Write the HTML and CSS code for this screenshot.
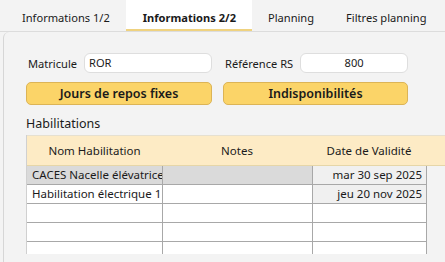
FILE: index.html
```html
<!DOCTYPE html>
<html lang="fr">
<head>
<meta charset="utf-8">
<link rel="stylesheet" href="styles.css">
</head>
<body>
<div class="tabs">
  <div class="tab">Informations 1/2</div>
  <div class="tab active">Informations 2/2</div>
  <div class="tab">Planning</div>
  <div class="tab">Filtres planning</div>
</div>
<div class="panel">
  <div class="form">
    <div class="field"><span class="lbl">Matricule</span><div class="input">ROR</div></div>
    <div class="field"><span class="lbl">Référence RS</span><div class="input center">800</div></div>
    <div class="btn">Jours de repos fixes</div>
    <div class="btn">Indisponibilités</div>
  </div>
  <div class="section">Habilitations</div>
  <div class="table">
    <div class="thead">
      <div class="th">Nom Habilitation</div>
      <div class="th">Notes</div>
      <div class="th">Date de Validité</div>
      <div class="th"></div>
    </div>
    <div class="tr sel">
      <div class="td">CACES Nacelle élévatrice</div>
      <div class="td"></div>
      <div class="td date">mar 30 sep 2025</div>
    </div>
    <div class="tr">
      <div class="td">Habilitation électrique 1</div>
      <div class="td"></div>
      <div class="td date">jeu 20 nov 2025</div>
    </div>
    <div class="tr">
      <div class="td"></div><div class="td"></div><div class="td"></div>
    </div>
    <div class="tr">
      <div class="td"></div><div class="td"></div><div class="td"></div>
    </div>
    <div class="tr last">
      <div class="td"></div><div class="td"></div><div class="td"></div>
    </div>
  </div>
</div>
</body>
</html>
```
FILE: styles.css
```css
html, body {
  margin: 0;
  padding: 0;
  background: #f3f3f3;
  font-family: "Noto Sans", "Open Sans", sans-serif;
  font-size: 11.1px;
  color: #1a1a1a;
  width: 445px;
  height: 262px;
  overflow: hidden;
}
.tabs {
  display: flex;
  height: 31px;
  padding-left: 6px;
  border-bottom: 1px solid #dcdcdc;
  background: #f3f3f3;
}
.tab {
  padding: 4px 16px 0;
  display: flex;
  align-items: center;
  white-space: nowrap;
  height: 31px;
  box-sizing: border-box;
}
.tab.active {
  background: #ffffff;
  font-weight: 700;
  border-bottom: 2px solid #efd27f;
  padding: 6px 16px 0 17px;
}
.panel {
  margin-left: 3px;
  border-left: 1px solid #d6d6d6;
  border-top-left-radius: 6px;
  background: #f3f3f3;
  padding: 21px 0 0 22px;
  height: 230px;
  box-sizing: border-box;
}
.form {
  display: grid;
  grid-template-columns: 186px 185px;
  column-gap: 11px;
  row-gap: 9px;
}
.field {
  display: flex;
  align-items: center;
  gap: 7px;
  height: 20px;
}
.lbl {
  padding-left: 2px;
  white-space: nowrap;
}
.input {
  flex: 1;
  height: 20px;
  box-sizing: border-box;
  background: #fff;
  border: 1px solid #dedede;
  border-radius: 6px;
  padding: 0 4px;
  line-height: 18px;
}
.input.center { text-align: center; }
.btn {
  height: 23px;
  box-sizing: border-box;
  background: #fbd468;
  border: 1px solid #dcb456;
  border-radius: 5px;
  text-align: center;
  font-weight: 600;
  font-size: 12.5px;
  line-height: 21px;
}
.section {
  margin-top: 9px;
  font-size: 12.5px;
  height: 21px;
  line-height: 19px;
}
.table {
  border-left: 1px solid #d0d0d0;
  background: #f3f3f3;
}
.thead {
  display: grid;
  grid-template-columns: 135px 150px 114px 1fr;
  height: 31px;
  background: #fdebc5;
  border-top: 1px solid #e6e0d0;
  border-bottom: 1px solid #e6d6a8;
  box-sizing: border-box;
  font-size: 11.5px;
}
.th {
  display: flex;
  align-items: center;
  justify-content: center;
  white-space: nowrap;
}
.tr {
  display: grid;
  grid-template-columns: 136px 150px 114px;
  height: 19px;
  width: 400px;
  font-size: 11.5px;
}
.tr.last { height: 12px; }
.td {
  background: #fff;
  border-right: 1px solid #a8a8a8;
  border-bottom: 1px solid #a8a8a8;
  box-sizing: border-box;
  padding: 0 4px;
  line-height: 18px;
  white-space: nowrap;
  overflow: hidden;
}
.td:first-child { padding-left: 5px; }
.tr.sel .td { background: #dadada; }
.tr .td.date { background: #f0f0f0; text-align: right; }
.tr.last .td { border-bottom: 0; }
```
